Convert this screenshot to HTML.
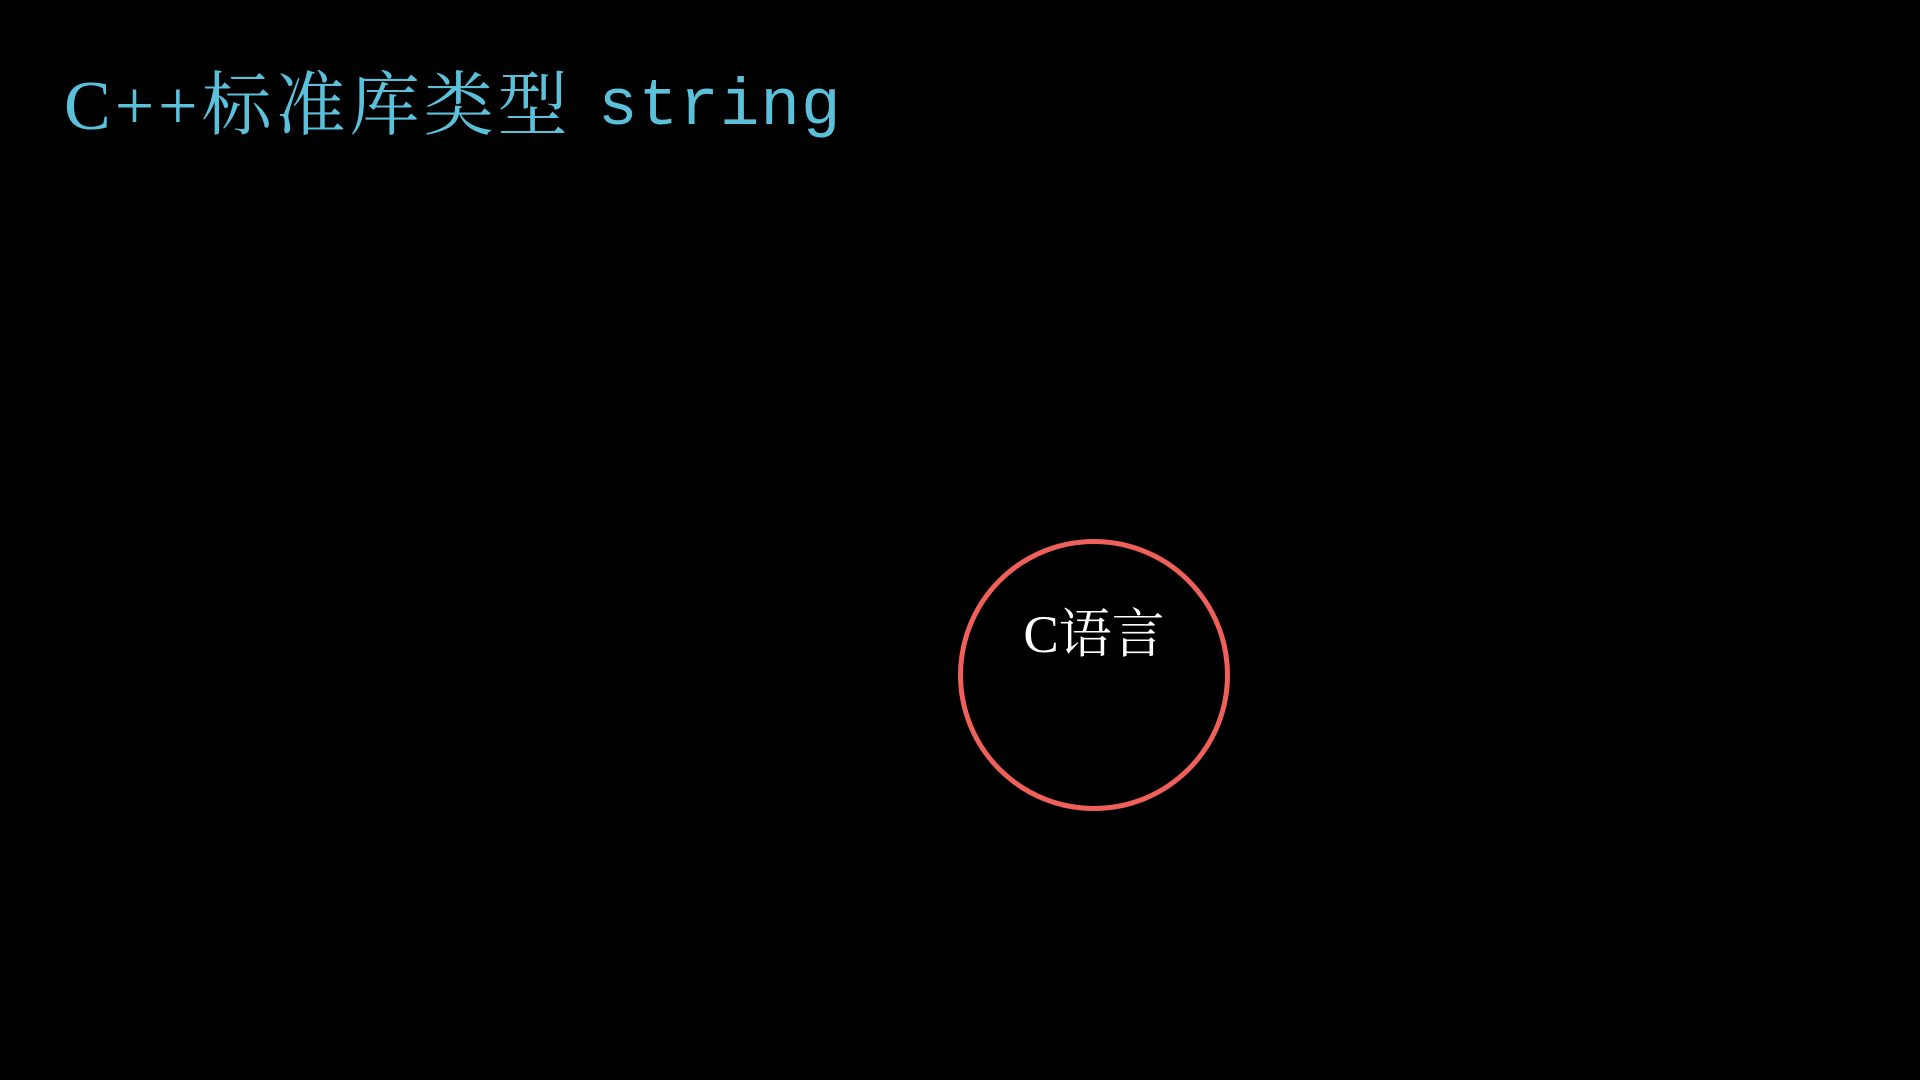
<!DOCTYPE html>
<html><head><meta charset="utf-8"><style>
html,body{margin:0;padding:0;background:#000;width:1920px;height:1080px;overflow:hidden;position:relative}
.t{position:absolute;left:64px;top:62px;font-size:70px;letter-spacing:4px;color:#5bc0da;font-family:"Liberation Serif","Noto Serif CJK SC",serif;white-space:nowrap;line-height:90px}
.m{position:absolute;left:598px;top:62px;color:#5bc0da;font-family:"Liberation Mono","DejaVu Sans Mono",monospace;font-size:66px;letter-spacing:1px;line-height:90px}
.c{position:absolute;left:958px;top:539px;width:262px;height:262px;border:5px solid #f0605a;border-radius:50%}
.l{position:absolute;left:994px;top:600px;width:200px;text-align:center;color:#fff;font-size:53px;font-family:"Liberation Serif","Noto Serif CJK SC",serif;line-height:70px}
</style></head><body>
<div class="t">C++标准库类型</div>
<div class="m">string</div>
<div class="c"></div>
<div class="l">C语言</div>
</body></html>
